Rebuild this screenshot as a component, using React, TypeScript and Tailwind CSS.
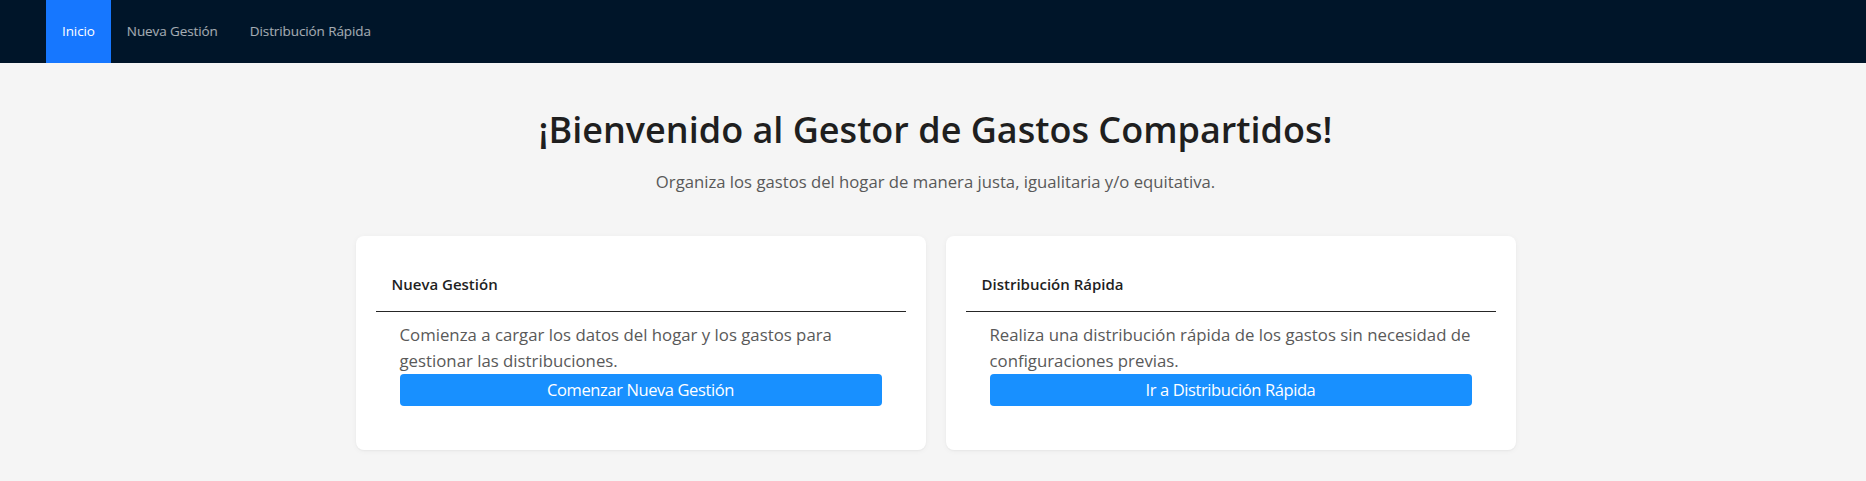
const navItems = ["Inicio", "Nueva Gestión", "Distribución Rápida"];

const cards = [
  {
    title: "Nueva Gestión",
    text: "Comienza a cargar los datos del hogar y los gastos para gestionar las distribuciones.",
    action: "Comenzar Nueva Gestión",
  },
  {
    title: "Distribución Rápida",
    text: "Realiza una distribución rápida de los gastos sin necesidad de configuraciones previas.",
    action: "Ir a Distribución Rápida",
  },
];

const App = () => {
  return (
    <div className="min-h-[481px] bg-[#f5f5f5] font-['Open_Sans',sans-serif]">
      {/* Top menu */}
      <header className="flex h-[63px] items-stretch bg-[#001529] px-[46px]">
        {navItems.map((item, i) => (
          <a
            key={item}
            className={
              i === 0
                ? "flex items-center bg-[#1677ff] px-4 text-[13.5px] tracking-[-0.1px] text-white"
                : "flex items-center px-4 text-[13.5px] tracking-[-0.1px] text-white/65"
            }
          >
            {item}
          </a>
        ))}
      </header>

      <main className="pl-[5px]">
        <div className="pt-[43px] text-center">
          <h1 className="text-[36px] leading-[48px] font-semibold text-[#1f1f1f]">
            ¡Bienvenido al Gestor de Gastos Compartidos!
          </h1>
          <p className="mt-4 text-[16.7px] leading-6 text-[#595959]">
            Organiza los gastos del hogar de manera justa, igualitaria y/o equitativa.
          </p>
        </div>

        <div className="mx-auto mt-[42px] grid w-[1160px] grid-cols-2 gap-5 pb-[31px]">
          {cards.map((card) => (
            <div key={card.title} className="rounded-lg bg-white p-5 shadow-[0_1px_2px_rgba(0,0,0,0.04),0_1px_6px_rgba(0,0,0,0.04)]">
              <div className="flex h-[56px] items-center border-b border-[#262626] px-4 pt-[2px]">
                <h3 className="text-[15px] font-semibold text-[#1f1f1f]">{card.title}</h3>
              </div>
              <div className="px-6 pt-[10px] pb-6">
                <p className="text-[16.8px] leading-[26px] text-[#595959]">{card.text}</p>
                <button className="h-8 w-full rounded-[4px] bg-[#1890ff] text-[16.5px] tracking-[-0.4px] text-white">
                  {card.action}
                </button>
              </div>
            </div>
          ))}
        </div>
      </main>
    </div>
  );
};

export default App;
